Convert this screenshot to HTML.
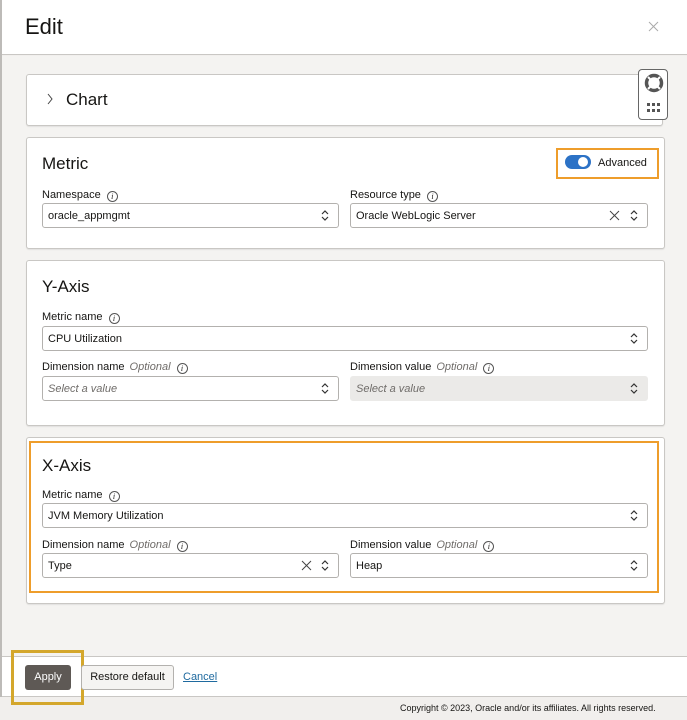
<!DOCTYPE html>
<html><head><meta charset="utf-8"><style>
*{box-sizing:border-box;margin:0;padding:0}
body{width:687px;height:720px;position:relative;overflow:hidden;font-family:"Liberation Sans",sans-serif;color:#161513;background:#f1efed}
.a{position:absolute}
.card{position:absolute;background:#fff;border:1px solid #c9c7c4;border-radius:3px;box-shadow:0 1px 1px rgba(0,0,0,.08)}
.t{position:absolute;font-size:17px}
.lbl{position:absolute;font-size:11px;color:#161513;white-space:nowrap}
.lbl i{color:#6f6c69;margin-left:5px}
.info{display:inline-block;width:11px;height:11px;border:1px solid #555;border-radius:50%;font-size:8px;text-align:center;line-height:9px;font-style:italic;margin-left:6px;vertical-align:-1px;font-family:"Liberation Serif",serif}
.f{position:absolute;height:25px;border:1px solid #b3b1ae;border-radius:3px;background:#fff;font-size:11px;display:flex;align-items:center;padding-left:5px}
.f.ph{color:#6f6c69;font-style:italic}
.f.dis{background:#ebeae8;border-color:#ebeae8}
.ch{position:absolute;right:9px;top:5px;width:8px;height:13px}
.x{position:absolute;top:6px;width:11px;height:11px}
</style></head><body>
<div class="a" style="left:0;top:0;width:2px;height:697px;background:#bdbbb8"></div>
<div class="a" style="left:2px;top:0;width:685px;height:55px;background:#fff;border-bottom:1px solid #c9c7c4"></div>
<div class="a" style="left:25px;top:14px;font-size:22px">Edit</div>
<svg class="a" style="left:648px;top:21px" width="11" height="11"><path d="M1 1L10 10M10 1L1 10" stroke="#aaa" stroke-width="1"/></svg>
<div class="a" style="left:2px;top:56px;width:685px;height:600px;background:#f4f3f1"></div>

<div class="card" style="left:26px;top:74px;width:637px;height:52px"></div>
<svg class="a" style="left:46px;top:93px" width="8" height="12"><path d="M2 1L6 6L2 11" stroke="#444" fill="none"/></svg>
<div class="t" style="left:66px;top:90px">Chart</div>
<div class="a" style="left:638px;top:69px;width:30px;height:51px;background:#fff;border:1px solid #666;border-radius:4px"></div>
<svg class="a" style="left:644px;top:73px" width="20" height="20"><circle cx="10" cy="10" r="7.5" fill="none" stroke="#555" stroke-width="3.5"/><path d="M4 4L7 7M16 4L13 7M4 16L7 13M16 16L13 13" stroke="#fff" stroke-width="2"/></svg>
<svg class="a" style="left:647px;top:103px" width="14" height="11" fill="#555"><rect x="0" y="0" width="3" height="3"/><rect x="5" y="0" width="3" height="3"/><rect x="10" y="0" width="3" height="3"/><rect x="0" y="6" width="3" height="3"/><rect x="5" y="6" width="3" height="3"/><rect x="10" y="6" width="3" height="3"/></svg>

<div class="card" style="left:26px;top:137px;width:639px;height:112px"></div>
<div class="t" style="left:42px;top:154px">Metric</div>
<div class="a" style="left:556px;top:148px;width:103px;height:31px;border:2px solid #ee9d2b"></div>
<div class="a" style="left:565px;top:155px;width:26px;height:14px;background:#2c72c6;border-radius:7px"></div>
<div class="a" style="left:578px;top:157px;width:10px;height:10px;background:#fff;border-radius:50%"></div>
<div class="a" style="left:598px;top:157px;font-size:11px">Advanced</div>
<div class="lbl" style="left:42px;top:189px">Namespace<span class="info">i</span></div>
<div class="lbl" style="left:350px;top:189px">Resource type<span class="info">i</span></div>
<div class="f" style="left:42px;top:203px;width:297px">oracle_appmgmt<svg class="ch" viewBox="0 0 8 13"><path d="M1 5L4 2L7 5M1 8L4 11L7 8" stroke="#333" fill="none" stroke-width="1.2"/></svg></div>
<div class="f" style="left:350px;top:203px;width:298px">Oracle WebLogic Server<svg class="x" style="left:258px" viewBox="0 0 11 11"><path d="M1 1L10 10M10 1L1 10" stroke="#444"/></svg><svg class="ch" viewBox="0 0 8 13"><path d="M1 5L4 2L7 5M1 8L4 11L7 8" stroke="#333" fill="none" stroke-width="1.2"/></svg></div>

<div class="card" style="left:26px;top:260px;width:639px;height:166px"></div>
<div class="t" style="left:42px;top:277px">Y-Axis</div>
<div class="lbl" style="left:42px;top:311px">Metric name<span class="info">i</span></div>
<div class="f" style="left:42px;top:326px;width:606px">CPU Utilization<svg class="ch" viewBox="0 0 8 13"><path d="M1 5L4 2L7 5M1 8L4 11L7 8" stroke="#333" fill="none" stroke-width="1.2"/></svg></div>
<div class="lbl" style="left:42px;top:361px">Dimension name<i>Optional</i><span class="info">i</span></div>
<div class="lbl" style="left:350px;top:361px">Dimension value<i>Optional</i><span class="info">i</span></div>
<div class="f ph" style="left:42px;top:376px;width:297px">Select a value<svg class="ch" viewBox="0 0 8 13"><path d="M1 5L4 2L7 5M1 8L4 11L7 8" stroke="#333" fill="none" stroke-width="1.2"/></svg></div>
<div class="f ph dis" style="left:350px;top:376px;width:298px">Select a value<svg class="ch" viewBox="0 0 8 13"><path d="M1 5L4 2L7 5M1 8L4 11L7 8" stroke="#333" fill="none" stroke-width="1.2"/></svg></div>

<div class="card" style="left:26px;top:437px;width:639px;height:167px"></div>
<div class="a" style="left:29px;top:441px;width:630px;height:152px;border:2px solid #ee9d2b"></div>
<div class="t" style="left:42px;top:456px">X-Axis</div>
<div class="lbl" style="left:42px;top:489px">Metric name<span class="info">i</span></div>
<div class="f" style="left:42px;top:503px;width:606px">JVM Memory Utilization<svg class="ch" viewBox="0 0 8 13"><path d="M1 5L4 2L7 5M1 8L4 11L7 8" stroke="#333" fill="none" stroke-width="1.2"/></svg></div>
<div class="lbl" style="left:42px;top:539px">Dimension name<i>Optional</i><span class="info">i</span></div>
<div class="lbl" style="left:350px;top:539px">Dimension value<i>Optional</i><span class="info">i</span></div>
<div class="f" style="left:42px;top:553px;width:297px">Type<svg class="x" style="left:258px" viewBox="0 0 11 11"><path d="M1 1L10 10M10 1L1 10" stroke="#444"/></svg><svg class="ch" viewBox="0 0 8 13"><path d="M1 5L4 2L7 5M1 8L4 11L7 8" stroke="#333" fill="none" stroke-width="1.2"/></svg></div>
<div class="f" style="left:350px;top:553px;width:298px">Heap<svg class="ch" viewBox="0 0 8 13"><path d="M1 5L4 2L7 5M1 8L4 11L7 8" stroke="#333" fill="none" stroke-width="1.2"/></svg></div>

<div class="a" style="left:2px;top:656px;width:685px;height:41px;background:#fff;border-top:1px solid #c9c7c4;border-bottom:1px solid #c9c7c4"></div>
<div class="a" style="left:25px;top:665px;width:46px;height:25px;background:#5e5955;border-radius:3px;color:#fff;font-size:11px;text-align:center;line-height:25px">Apply</div>
<div class="a" style="left:11px;top:650px;width:73px;height:55px;border:3px solid #d4a72c"></div>
<div class="a" style="left:81px;top:665px;width:93px;height:25px;background:#f5f4f2;border:1px solid #b3b1ae;border-radius:3px;font-size:11px;text-align:center;line-height:23px">Restore default</div>
<div class="a" style="left:183px;top:671px;font-size:11px;color:#1f6a9f;text-decoration:underline">Cancel</div>
<div class="a" style="left:400px;top:703px;font-size:9px;color:#161513;white-space:nowrap">Copyright © 2023, Oracle and/or its affiliates. All rights reserved.</div>
</body></html>
